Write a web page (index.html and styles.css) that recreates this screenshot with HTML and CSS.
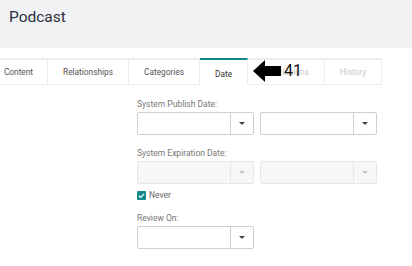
FILE: index.html
```html
<!DOCTYPE html>
<html lang="en">
<head>
  <meta charset="UTF-8" />
  <title>Podcast</title>
  <link rel="stylesheet" href="styles.css">
</head>
<body>

<header class="page-head">
  <h1>Podcast</h1>
</header>

<nav class="tabs">
  <div class="tab tab-content">Content</div>
  <div class="tab tab-rel">Relationships</div>
  <div class="tab tab-cat">Categories</div>
  <div class="tab active">Date</div>
  <div class="tab disabled tab-perm">
    Permissions
    <div class="callout">
      <svg width="28" height="22" viewBox="0 0 28 22"><path d="M0 11 L12 0 L12 6 L28 6 L28 16 L12 16 L12 22 Z" fill="#000"/></svg>
      <span>41</span>
    </div>
  </div>
  <div class="tab disabled tab-hist">History</div>
</nav>

<section class="form">
  <div class="field">
    <label>System Publish Date:</label>
    <div class="row">
      <div class="select"><span class="value"></span><span class="caret"></span></div>
      <div class="select"><span class="value"></span><span class="caret"></span></div>
    </div>
  </div>

  <div class="field">
    <label>System Expiration Date:</label>
    <div class="row">
      <div class="select off"><span class="value"></span><span class="caret"></span></div>
      <div class="select off"><span class="value"></span><span class="caret"></span></div>
    </div>
    <div class="check">
      <span class="box">
        <svg width="9" height="9" viewBox="0 0 9 9"><path d="M2 4.8 L3.8 6.5 L7 2.8" stroke="#fff" stroke-width="1.2" fill="none"/></svg>
      </span>
      Never
    </div>
  </div>

  <div class="field">
    <label>Review On:</label>
    <div class="row">
      <div class="select"><span class="value"></span><span class="caret"></span></div>
    </div>
  </div>
</section>

</body>
</html>
```

FILE: styles.css
```css
* { box-sizing: border-box; margin: 0; padding: 0; }

body {
  font-family: Roboto, "Liberation Sans", sans-serif;
  background: #fff;
  color: #333;
  width: 412px;
  height: 266px;
  overflow: hidden;
}

.page-head {
  background: #f1f2f4;
  height: 48px;
  padding: 6px 9px 0;
}

.page-head h1 {
  font-size: 15.5px;
  font-weight: 400;
  color: #2c2e3e;
  line-height: 22px;
}

.tabs {
  display: flex;
  margin-top: 10px;
  margin-left: -10px;
  width: 392px;
  height: 27px;
  border-top: 2px solid #ececec;
}

.tab {
  height: 25px;
  line-height: 25px;
  font-size: 8.3px;
  color: #555;
  text-align: center;
  border-right: 1px solid #ececec;
  border-bottom: 1px solid #ececec;
  width: 48px;
  position: relative;
}

.tab-content { width: 58px; }
.tab-rel { width: 81px; }
.tab-cat { width: 71px; }
.tab-perm { width: 77px; }
.tab-hist { width: 57px; }

.tab.active {
  width: 48px;
  margin-top: -2px;
  height: 27px;
  line-height: 29px;
  border-top: 2px solid #138a8a;
  border-bottom: 1px solid #fff;
  color: #333;
}

.tab.disabled { color: #c8c8c8; }

.callout {
  position: absolute;
  left: 5px;
  top: 0;
  display: flex;
  align-items: center;
  gap: 3px;
  height: 22px;
}

.callout span {
  font-size: 16px;
  color: #111;
  line-height: 16px;
}

.form {
  padding: 14px 0 0 137px;
  display: flex;
  flex-direction: column;
  gap: 13px;
}

.field label {
  display: block;
  font-size: 8.5px;
  color: #777;
  line-height: 10px;
  margin-bottom: 3px;
}

.row {
  display: flex;
  gap: 6px;
}

.select {
  width: 117px;
  height: 23px;
  border: 1px solid #cfcfcf;
  border-radius: 2px;
  display: flex;
  background: #fff;
}

.select .value { flex: 1; }

.select .caret {
  width: 23px;
  border-left: 1px solid #cfcfcf;
  position: relative;
}

.select .caret::after {
  content: "";
  position: absolute;
  left: 8px;
  top: 9px;
  border-left: 3px solid transparent;
  border-right: 3px solid transparent;
  border-top: 3px solid #444;
}

.select.off {
  background: #f7f7f7;
  border-color: #e6e6e6;
}

.select.off .caret { border-left-color: #e6e6e6; }
.select.off .caret::after { border-top-color: #c4c4c4; }

.check {
  display: flex;
  align-items: center;
  gap: 3px;
  height: 10px;
  font-size: 8.5px;
  color: #666;
  margin-top: 6px;
}

.check .box {
  width: 9px;
  height: 9px;
  background: #138a8a;
  border-radius: 1px;
  display: flex;
}
```
